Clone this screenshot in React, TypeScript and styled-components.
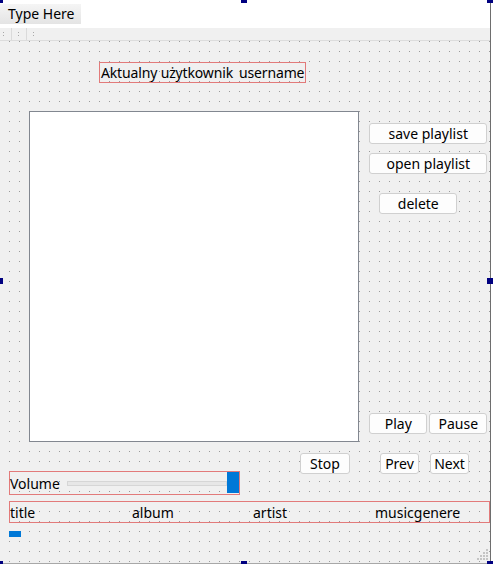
import React from "react";
import styled, { createGlobalStyle } from "styled-components";

const Global = createGlobalStyle`
  html, body { margin: 0; padding: 0; background: #ffffff; }
  body { font-family: "Noto Sans", "Open Sans", sans-serif; }
  * { box-sizing: border-box; }
`;

const FONT = `"Noto Sans", "Open Sans", sans-serif`;
const RED = "#e27a7a";

const Form = styled.div`
  position: relative;
  width: 491px;
  height: 564px;
  display: flex;
  flex-direction: column;
  background: #f0f0f0;
  border-right: 1px solid #6e6e6e;
  border-bottom: 1px solid #a8a8a8;
  font-family: ${FONT};
  font-size: 14px;
  color: #000;
`;

const MenuBar = styled.div`
  height: 28px;
  background: #ffffff;
  display: flex;
  align-items: flex-start;
  padding-top: 4px;
`;

const MenuItem = styled.div`
  height: 20px;
  width: 81px;
  padding-left: 8px;
  line-height: 20px;
  font-size: 14px;
  background: linear-gradient(#f5f5f5, #e4e4e4);
`;

const ToolBar = styled.div`
  height: 13px;
  background: #f0f0f0;
  border-bottom: 1px solid #dcdcdc;
  display: flex;
  align-items: stretch;
  padding-left: 3px;
`;

const Grip = styled.div`
  width: 2px;
  display: flex;
  flex-direction: column;
  justify-content: center;
  gap: 2px;
  & > i {
    display: block;
    width: 1px;
    height: 1px;
    background: #a9a9a9;
  }
`;

const Sep = styled.div`
  width: 1px;
  margin: 0 6px;
  background: #dadada;
`;

const Canvas = styled.div`
  flex: 1;
  display: flex;
  flex-direction: column;
  background-color: #f0f0f0;
  background-image: linear-gradient(to bottom, transparent 1px, #f0f0f0 1px),
    linear-gradient(to right, #9a9a9a 1px, transparent 1px);
  background-size: 10px 10px, 10px 10px;
  background-position: 9px 0, 9px 0;
`;

const HeaderBox = styled.div`
  margin: 21px 0 0 99px;
  width: 207px;
  height: 21px;
  border: 1px solid ${RED};
  display: flex;
  align-items: center;
  padding-left: 1px;
  gap: 6px;
  white-space: nowrap;
  letter-spacing: -0.15px;
`;

const MiddleRow = styled.div`
  display: flex;
  margin-top: 28px;
`;

const ListBox = styled.div`
  margin-left: 29px;
  width: 331px;
  height: 331px;
  background: #ffffff;
  border: 1px solid #828790;
`;

const SideColumn = styled.div`
  margin-left: 10px;
  width: 121px;
  display: flex;
  flex-direction: column;
  align-items: flex-start;
`;

const Button = styled.div<{ $w: number; $mt?: number; $ml?: number }>`
  width: ${(p) => p.$w}px;
  height: 21px;
  margin-top: ${(p) => p.$mt ?? 0}px;
  margin-left: ${(p) => p.$ml ?? 0}px;
  flex: none;
  display: flex;
  align-items: center;
  justify-content: center;
  background: #fdfdfd;
  border: 1px solid #d0d0d0;
  border-radius: 3px;
  font-size: 14px;
  line-height: 1;
  white-space: nowrap;
`;

const PlayRow = styled.div`
  display: flex;
  gap: 2px;
  margin-top: 199px;
`;

const TransportRow = styled.div`
  display: flex;
  margin-top: 11px;
`;

const VolumeBox = styled.div`
  margin: -3px 0 0 9px;
  width: 231px;
  height: 24px;
  border: 1px solid ${RED};
  display: flex;
  align-items: center;
`;

const VolumeLabel = styled.div`
  width: 57px;
  font-size: 14px;
`;

const Slider = styled.div`
  position: relative;
  flex: 1;
  height: 100%;
  display: flex;
  align-items: center;
`;

const Groove = styled.div`
  height: 5px;
  width: 160px;
  background: #e7e7e7;
  border: 1px solid #d6d6d6;
`;

const Handle = styled.div`
  position: absolute;
  right: 0;
  top: 0;
  width: 12px;
  height: 21px;
  background: #0078d7;
`;

const InfoBox = styled.div`
  margin: 6px 0 0 9px;
  width: 481px;
  height: 22px;
  border: 1px solid ${RED};
  display: grid;
  grid-template-columns: 122px 121px 122px 1fr;
  align-items: center;
  font-size: 14px;
`;

const Progress = styled.div`
  margin: 8px 0 0 9px;
  width: 12px;
  height: 6px;
  background: #0078d7;
`;

const Handle6 = styled.div<{ $x: number; $y: number }>`
  position: absolute;
  left: ${(p) => p.$x - 3}px;
  top: ${(p) => p.$y - 3}px;
  width: 6px;
  height: 6px;
  background: #000080;
  z-index: 2;
`;

const SizeGrip = styled.svg`
  position: absolute;
  right: 2px;
  bottom: 3px;
`;

const handles: [number, number][] = [
  [0, 0],
  [244, 0],
  [490, 0],
  [0, 281],
  [490, 281],
  [0, 564],
  [244, 564],
  [490, 564],
];

export default function App() {
  const gripDots: [number, number][] = [];
  for (let r = 0; r < 4; r++) {
    for (let c = 0; c < 4; c++) {
      if (r + c >= 3) gripDots.push([c * 3, r * 3]);
    }
  }
  return (
    <>
      <Global />
      <Form>
        <MenuBar>
          <MenuItem>Type Here</MenuItem>
        </MenuBar>
        <ToolBar>
          <Grip>
            <i />
            <i />
          </Grip>
          <Sep />
          <Grip>
            <i />
            <i />
          </Grip>
          <Sep />
          <Grip>
            <i />
            <i />
          </Grip>
        </ToolBar>
        <Canvas>
          <HeaderBox>
            <span>Aktualny użytkownik</span>
            <span>username</span>
          </HeaderBox>
          <MiddleRow>
            <ListBox />
            <SideColumn>
              <Button $w={118} $mt={12}>save playlist</Button>
              <Button $w={118} $mt={9}>open playlist</Button>
              <Button $w={78} $mt={19} $ml={10}>delete</Button>
              <PlayRow>
                <Button $w={58}>Play</Button>
                <Button $w={58}>Pause</Button>
              </PlayRow>
            </SideColumn>
          </MiddleRow>
          <TransportRow>
            <Button $w={50} $ml={300}>Stop</Button>
            <Button $w={39} $ml={30}>Prev</Button>
            <Button $w={39} $ml={11}>Next</Button>
          </TransportRow>
          <VolumeBox>
            <VolumeLabel>Volume</VolumeLabel>
            <Slider>
              <Groove />
              <Handle />
            </Slider>
          </VolumeBox>
          <InfoBox>
            <span>title</span>
            <span>album</span>
            <span>artist</span>
            <span>musicgenere</span>
          </InfoBox>
          <Progress />
        </Canvas>
        <SizeGrip width="11" height="11" viewBox="0 0 11 11">
          {gripDots.map(([x, y], i) => (
            <rect key={i} x={x} y={y} width="2" height="2" fill="#c4c4c4" />
          ))}
        </SizeGrip>
        {handles.map(([x, y], i) => (
          <Handle6 key={i} $x={x} $y={y} />
        ))}
      </Form>
    </>
  );
}
